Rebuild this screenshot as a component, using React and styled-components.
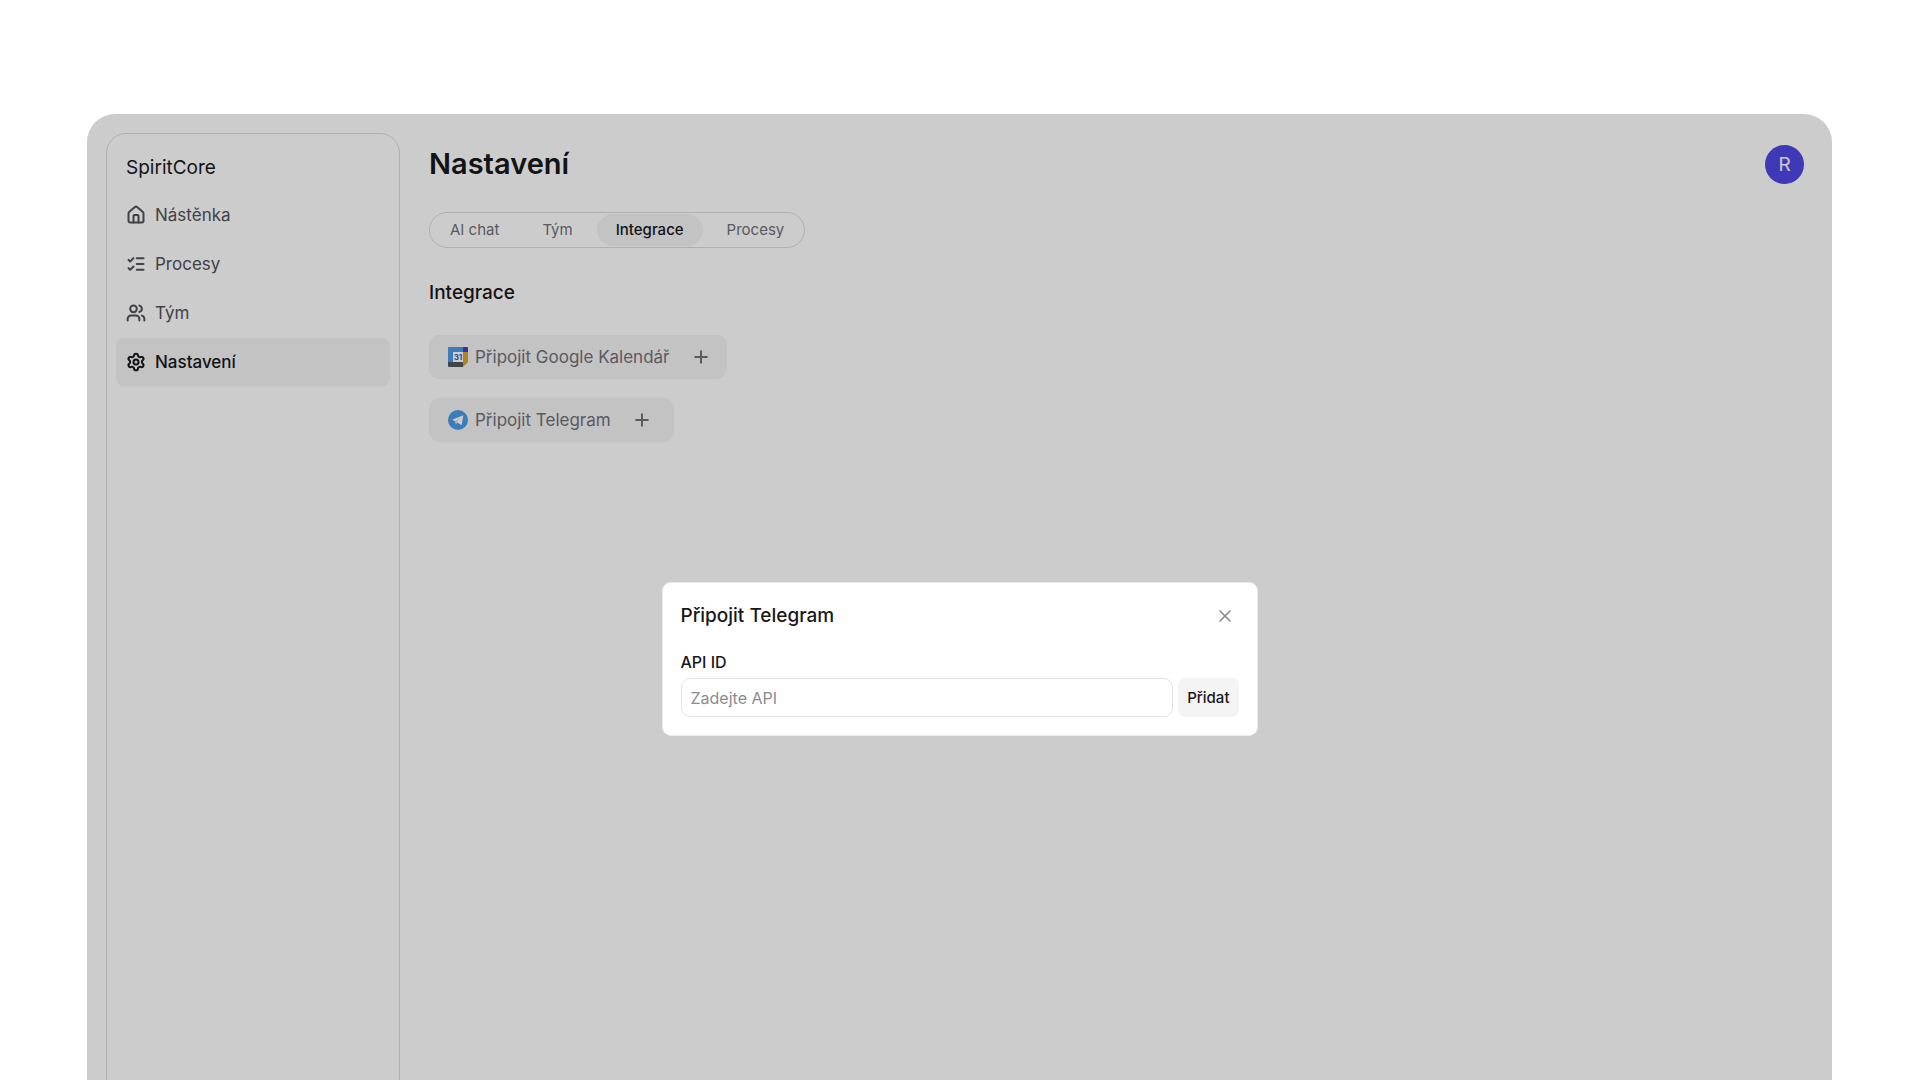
import React from "react"
import styled, { createGlobalStyle } from "styled-components"
import { House, ListChecks, Users, Settings, Plus, X } from "lucide-react"

const navItems = [
  { label: "Nástěnka", icon: House },
  { label: "Procesy", icon: ListChecks },
  { label: "Tým", icon: Users },
  { label: "Nastavení", icon: Settings, active: true },
]

const tabs = ["AI chat", "Tým", "Integrace", "Procesy"]

const CalendarIcon = () => (
  <svg width="20" height="20" viewBox="0 0 20 20" aria-hidden="true">
    <path d="M1 0h14v5H5v10H0V1a1 1 0 0 1 1-1z" fill="#4c9bea" />
    <path d="M15 0h4a1 1 0 0 1 1 1v4h-5z" fill="#4a3ad8" />
    <path d="M15 5h5v10l-5 5z" fill="#dfa628" />
    <path d="M0 15h15v5H1a1 1 0 0 1-1-1z" fill="#52575c" />
    <path d="M5 5h10v10H5z" fill="#fff" />
    <text x="10" y="13" textAnchor="middle" fontSize="8" fontWeight="700" fill="#2f62d0">31</text>
  </svg>
)

const TelegramIcon = () => (
  <svg width="20" height="20" viewBox="0 0 20 20" aria-hidden="true">
    <circle cx="10" cy="10" r="10" fill="#4c9be6" />
    <path d="M4 9.8 15.4 5.2 13.6 15.2 9.4 12.4 7.8 14 7.4 11.2z" fill="#fff" />
    <path d="M7.4 11.2 13 7.2 9 11.8 7.8 14z" fill="#c9dcee" />
  </svg>
)

const App = () => {
  return (
    <Page>
      <GlobalStyle />
      <Frame>
        <Sidebar>
          <Brand>SpiritCore</Brand>
          <Nav>
            {navItems.map(({ label, icon: Icon, active }) => (
              <NavLink key={label} href="#" $active={active}>
                <Icon size={20} strokeWidth={2.4} />
                {label}
              </NavLink>
            ))}
          </Nav>
        </Sidebar>
        <Main>
          <TopBar>
            <Title>Nastavení</Title>
            <Avatar type="button">R</Avatar>
          </TopBar>
          <Tabs>
            {tabs.map((tab) => (
              <Tab key={tab} type="button" $active={tab === "Integrace"}>{tab}</Tab>
            ))}
          </Tabs>
          <SectionTitle>Integrace</SectionTitle>
          <Integrations>
            <ConnectBtn type="button">
              <CalendarIcon />
              <span>Připojit Google Kalendář</span>
              <Plus size={20} strokeWidth={2.4} />
            </ConnectBtn>
            <ConnectBtn type="button" $wide>
              <TelegramIcon />
              <span>Připojit Telegram</span>
              <Plus size={20} strokeWidth={2.4} />
            </ConnectBtn>
          </Integrations>
        </Main>
        <Overlay>
          <Modal role="dialog" aria-labelledby="modal-title">
            <ModalHeader>
              <ModalTitle id="modal-title">Připojit Telegram</ModalTitle>
              <CloseBtn type="button" aria-label="Zavřít">
                <X size={20} strokeWidth={2} />
              </CloseBtn>
            </ModalHeader>
            <Label htmlFor="api-id">API ID</Label>
            <Field>
              <Input id="api-id" type="text" placeholder="Zadejte API" />
              <AddBtn type="button">Přidat</AddBtn>
            </Field>
          </Modal>
        </Overlay>
      </Frame>
    </Page>
  )
}
export default App

const GlobalStyle = createGlobalStyle`
*{
  box-sizing:border-box;
}
body{
  margin:0;
  background:#fff;
  color:#18181b;
  font-family:Inter, "Liberation Sans", sans-serif;
}
button, input{
  font-family:inherit;
}
button{
  border:none;
  cursor:pointer;
}
`
const Page = styled.div`
height:100vh;
overflow:hidden;
padding:114px 88px 0 87px;
`
const Frame = styled.div`
position:relative;
display:flex;
min-height:calc(100vh + 10px);
padding:19px 28px 19px 19px;
border-radius:28px 28px 0 0;
background:#fff;
overflow:hidden;
`
const Sidebar = styled.aside`
width:294px;
flex-shrink:0;
padding:20px 9px;
border:1px solid #dcdcdf;
border-radius:20px;
`
const Brand = styled.div`
padding:0 10px;
font-size:19px;
line-height:28px;
`
const Nav = styled.nav`
display:flex;
flex-direction:column;
gap:1px;
margin-top:9px;
`
const NavLink = styled.a`
display:flex;
align-items:center;
gap:9px;
height:48px;
padding:0 10px;
border-radius:8px;
font-size:17px;
font-weight:${({ $active }) => ($active ? 500 : 400)};
color:${({ $active }) => ($active ? "#18181b" : "#52525b")};
background:${({ $active }) => ($active ? "#f4f4f5" : "transparent")};
text-decoration:none;
`
const Main = styled.main`
flex:1;
display:flex;
flex-direction:column;
align-items:flex-start;
padding:10px 0 0 29px;
`
const TopBar = styled.header`
width:100%;
display:flex;
align-items:center;
justify-content:space-between;
`
const Title = styled.h1`
margin:0;
font-size:29px;
line-height:42px;
font-weight:600;
`
const Avatar = styled.button`
width:39px;
height:39px;
padding:0;
border-radius:50%;
background:#4f46e5;
color:#fff;
font-size:19px;
`
const Tabs = styled.div`
display:flex;
gap:5px;
margin-top:27px;
padding:1px;
border:1px solid #dcdcdf;
border-radius:18px;
`
const Tab = styled.button`
height:32px;
padding:0 19px 1px;
border-radius:16px;
font-size:15px;
font-weight:${({ $active }) => ($active ? 500 : 400)};
color:${({ $active }) => ($active ? "#18181b" : "#71717a")};
background:${({ $active }) => ($active ? "#f4f4f5" : "transparent")};
`
const SectionTitle = styled.h2`
margin:30px 0 0;
font-size:19px;
line-height:29px;
font-weight:500;
`
const Integrations = styled.div`
display:flex;
flex-direction:column;
align-items:flex-start;
gap:19px;
margin-top:28px;
`
const ConnectBtn = styled.button`
display:flex;
align-items:center;
height:44px;
padding:0 ${({ $wide }) => ($wide ? "22px" : "16px")} 0 19px;
border-radius:10px;
background:#f4f4f5;
color:#71717a;
font-size:17px;

span{
  margin:0 21px 0 7px;
}
`
const Overlay = styled.div`
position:absolute;
inset:0;
display:flex;
align-items:center;
justify-content:center;
background:rgba(0,0,0,0.2);
`
const Modal = styled.div`
width:100%;
max-width:596px;
padding:18px;
border:1px solid #ececee;
border-radius:9px;
background:#fff;
`
const ModalHeader = styled.div`
display:flex;
align-items:center;
justify-content:space-between;
`
const ModalTitle = styled.h2`
margin:0;
font-size:19px;
line-height:29px;
font-weight:500;
`
const CloseBtn = styled.button`
display:flex;
padding:4px;
background:transparent;
color:#8b8b90;
`
const Label = styled.label`
display:block;
margin:20px 0 4px;
font-size:16px;
line-height:24px;
font-weight:500;
`
const Field = styled.div`
display:flex;
gap:5px;
`
const Input = styled.input`
flex:1;
min-width:0;
height:39px;
padding:0 9px;
border:1px solid #e4e4e7;
border-radius:9px;
background:#fff;
font-size:16px;
outline:none;

&::placeholder{
  color:#8b8b90;
  opacity:1;
}
`
const AddBtn = styled.button`
height:39px;
padding:0 9px;
border-radius:7px;
background:#f4f4f5;
color:#18181b;
font-size:15px;
font-weight:500;
`
